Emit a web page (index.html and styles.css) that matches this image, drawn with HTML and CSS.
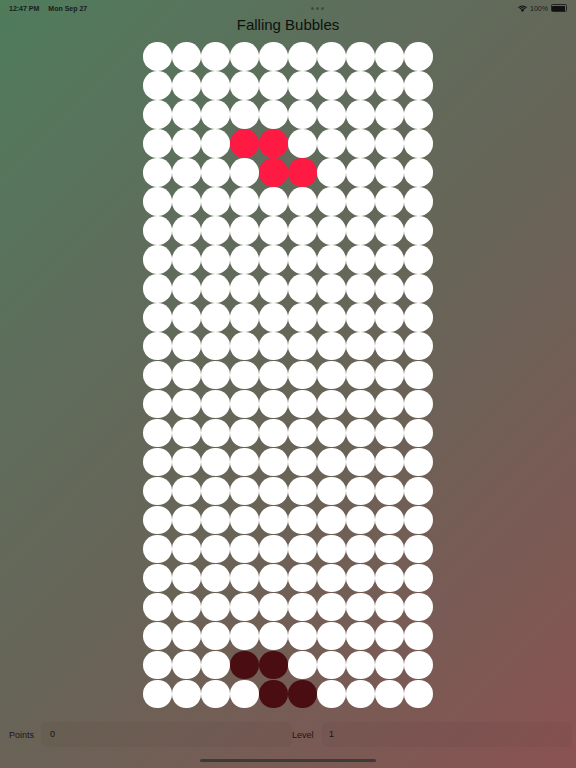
FILE: index.html
```html
<!DOCTYPE html>
<html>
<head>
<meta charset="utf-8">
<link rel="stylesheet" href="styles.css">
</head>
<body>
<div class="screen">
  <div class="status">
    <div class="status-left"><span>12:47 PM</span><span class="date">Mon Sep 27</span></div>
    <div class="dots"><i></i><i></i><i></i></div>
    <div class="status-right">
      <svg class="wifi" width="9" height="7" viewBox="0 0 12 9"><path d="M6 9 L3.6 6.4 A3.4 3.4 0 0 1 8.4 6.4 Z M1.8 4.6 A6 6 0 0 1 10.2 4.6 L9.2 5.6 A4.6 4.6 0 0 0 2.8 5.6 Z M0 2.8 A8.6 8.6 0 0 1 12 2.8 L11 3.8 A7.2 7.2 0 0 0 1 3.8 Z" fill="#111"/></svg>
      <span>100%</span>
      <span class="battery"><span class="fill"></span></span>
    </div>
  </div>
  <div class="title">Falling Bubbles</div>
  <div class="board">
    <div class="row"><span></span><span></span><span></span><span></span><span></span><span></span><span></span><span></span><span></span><span></span></div>
    <div class="row"><span></span><span></span><span></span><span></span><span></span><span></span><span></span><span></span><span></span><span></span></div>
    <div class="row"><span></span><span></span><span></span><span></span><span></span><span></span><span></span><span></span><span></span><span></span></div>
    <div class="row"><span></span><span></span><span></span><span class="r"></span><span class="r"></span><span></span><span></span><span></span><span></span><span></span></div>
    <div class="row"><span></span><span></span><span></span><span></span><span class="r"></span><span class="r"></span><span></span><span></span><span></span><span></span></div>
    <div class="row"><span></span><span></span><span></span><span></span><span></span><span></span><span></span><span></span><span></span><span></span></div>
    <div class="row"><span></span><span></span><span></span><span></span><span></span><span></span><span></span><span></span><span></span><span></span></div>
    <div class="row"><span></span><span></span><span></span><span></span><span></span><span></span><span></span><span></span><span></span><span></span></div>
    <div class="row"><span></span><span></span><span></span><span></span><span></span><span></span><span></span><span></span><span></span><span></span></div>
    <div class="row"><span></span><span></span><span></span><span></span><span></span><span></span><span></span><span></span><span></span><span></span></div>
    <div class="row"><span></span><span></span><span></span><span></span><span></span><span></span><span></span><span></span><span></span><span></span></div>
    <div class="row"><span></span><span></span><span></span><span></span><span></span><span></span><span></span><span></span><span></span><span></span></div>
    <div class="row"><span></span><span></span><span></span><span></span><span></span><span></span><span></span><span></span><span></span><span></span></div>
    <div class="row"><span></span><span></span><span></span><span></span><span></span><span></span><span></span><span></span><span></span><span></span></div>
    <div class="row"><span></span><span></span><span></span><span></span><span></span><span></span><span></span><span></span><span></span><span></span></div>
    <div class="row"><span></span><span></span><span></span><span></span><span></span><span></span><span></span><span></span><span></span><span></span></div>
    <div class="row"><span></span><span></span><span></span><span></span><span></span><span></span><span></span><span></span><span></span><span></span></div>
    <div class="row"><span></span><span></span><span></span><span></span><span></span><span></span><span></span><span></span><span></span><span></span></div>
    <div class="row"><span></span><span></span><span></span><span></span><span></span><span></span><span></span><span></span><span></span><span></span></div>
    <div class="row"><span></span><span></span><span></span><span></span><span></span><span></span><span></span><span></span><span></span><span></span></div>
    <div class="row"><span></span><span></span><span></span><span></span><span></span><span></span><span></span><span></span><span></span><span></span></div>
    <div class="row"><span></span><span></span><span></span><span class="d"></span><span class="d"></span><span></span><span></span><span></span><span></span><span></span></div>
    <div class="row"><span></span><span></span><span></span><span></span><span class="d"></span><span class="d"></span><span></span><span></span><span></span><span></span></div>
  </div>
  <div class="footer">
    <div class="field"><span class="label">Points</span><span class="value">0</span></div>
    <div class="field level"><span class="label">Level</span><span class="value">1</span></div>
  </div>
  <div class="home"></div>
</div>
</body>
</html>
```
FILE: styles.css
```css
html, body {
  margin: 0;
  padding: 0;
}
body {
  width: 576px;
  height: 768px;
  overflow: hidden;
  font-family: "Liberation Sans", Arial, sans-serif;
}
.screen {
  width: 576px;
  height: 768px;
  display: flex;
  flex-direction: column;
  align-items: center;
  background: linear-gradient(135deg, #4f7c5b 0%, #5f6d5c 30%, #686457 55%, #7a5a54 80%, #8a5252 100%);
}
.status {
  width: 100%;
  box-sizing: border-box;
  height: 14px;
  padding: 2px 9px 0 9px;
  display: flex;
  align-items: center;
  justify-content: space-between;
  font-size: 7px;
  font-weight: bold;
  color: #1a1a1a;
}
.status-left { display: flex; gap: 9px; }
.dots { display: flex; gap: 2px; margin-left: 30px; }
.dots i {
  display: block;
  width: 3px;
  height: 3px;
  border-radius: 50%;
  background: #333;
  opacity: 0.6;
}
.status-right {
  display: flex;
  align-items: center;
  gap: 3px;
  font-weight: normal;
}
.battery {
  display: inline-block;
  width: 13px;
  height: 5px;
  border: 0.8px solid #222;
  border-radius: 1.5px;
  padding: 0.5px;
}
.battery .fill {
  display: block;
  width: 100%;
  height: 100%;
  background: #111;
  border-radius: 0.5px;
}
.title {
  height: 28px;
  line-height: 21px;
  font-size: 15px;
  color: #0d120e;
}
.board {
  display: flex;
  flex-direction: column;
}
.row {
  display: flex;
}
.row span {
  display: block;
  width: 28.6px;
  height: 28.6px;
  margin: 0.2px;
  border-radius: 50%;
  background: #ffffff;
}
.row span.r { background: #fe1a42; }
.row span.d { background: #4a0d12; }
.footer {
  margin-top: 14px;
  width: 576px;
  height: 25px;
  display: flex;
  align-items: center;
  font-size: 9px;
  color: #1d1414;
  box-sizing: border-box;
  padding-left: 9px;
}
.field {
  display: flex;
  align-items: center;
  height: 25px;
  width: 283px;
}
.field .label { width: 32px; }
.field.level .label { width: 30px; }
.field .value {
  flex: 1;
  height: 25px;
  line-height: 25px;
  padding-left: 9px;
  border-radius: 6px;
  background: rgba(70, 45, 40, 0.07);
}
.field.level .value { padding-left: 7px; margin-right: 3px; }
.home {
  margin-top: 12px;
  width: 176px;
  height: 3px;
  border-radius: 2px;
  background: #3d3a3a;
}
```
